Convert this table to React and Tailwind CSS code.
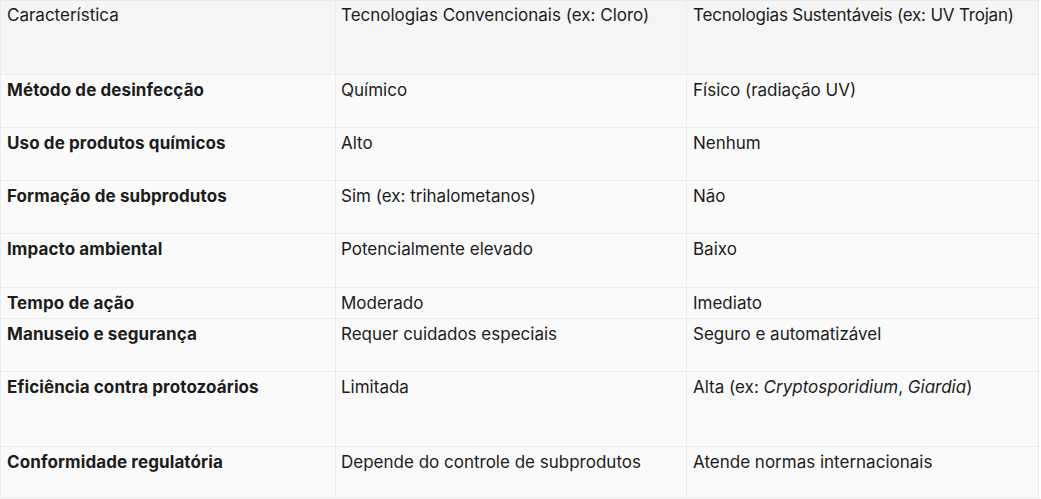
import React from "react";

const rows = [
  { h: "h-[53px]", a: "Método de desinfecção", b: "Químico", c: "Físico (radiação UV)" },
  { h: "h-[53px]", a: "Uso de produtos químicos", b: "Alto", c: "Nenhum" },
  { h: "h-[53px]", a: "Formação de subprodutos", b: "Sim (ex: trihalometanos)", c: "Não" },
  { h: "h-[54px]", a: "Impacto ambiental", b: "Potencialmente elevado", c: "Baixo" },
  { h: "h-[31px]", a: "Tempo de ação", b: "Moderado", c: "Imediato" },
  { h: "h-[53px]", a: "Manuseio e segurança", b: "Requer cuidados especiais", c: "Seguro e automatizável" },
  {
    h: "h-[75px]",
    a: "Eficiência contra protozoários",
    b: "Limitada",
    c: (
      <>
        Alta (ex: <i>Cryptosporidium</i>, <i>Giardia</i>)
      </>
    ),
  },
  { h: "h-[51px]", a: "Conformidade regulatória", b: "Depende do controle de subprodutos", c: "Atende normas internacionais" },
];

const cell = "border-r border-b border-[#ebebeb] px-[6px] leading-5";

export default function App() {
  return (
    <div className="w-[1041px] h-[499px] bg-white text-[17px] text-[#1c1c1c]" style={{ fontFamily: "Inter, 'Noto Sans', sans-serif" }}>
      <div className="grid grid-cols-[335px_351px_352px] border-l border-t border-[#ebebeb] w-[1039px]">
        <div className={`${cell} pt-[4px] h-[74px] bg-[#f5f5f5]`}>Característica</div>
        <div className={`${cell} pt-[4px] h-[74px] bg-[#f5f5f5] pl-[5px]`}>Tecnologias Convencionais (ex: Cloro)</div>
        <div className={`${cell} pt-[4px] h-[74px] bg-[#f5f5f5] tracking-[-0.2px]`}>Tecnologias Sustentáveis (ex: UV Trojan)</div>
        {rows.map((r, i) => (
          <React.Fragment key={i}>
            <div className={`${cell} pt-[5px] ${r.h} bg-[#fafafa] font-bold tracking-[0.1px]`}>{r.a}</div>
            <div className={`${cell} pt-[5px] ${r.h} bg-[#fafafa] pl-[5px]`}>{r.b}</div>
            <div className={`${cell} pt-[5px] ${r.h} bg-[#fafafa]`}>{r.c}</div>
          </React.Fragment>
        ))}
      </div>
    </div>
  );
}
